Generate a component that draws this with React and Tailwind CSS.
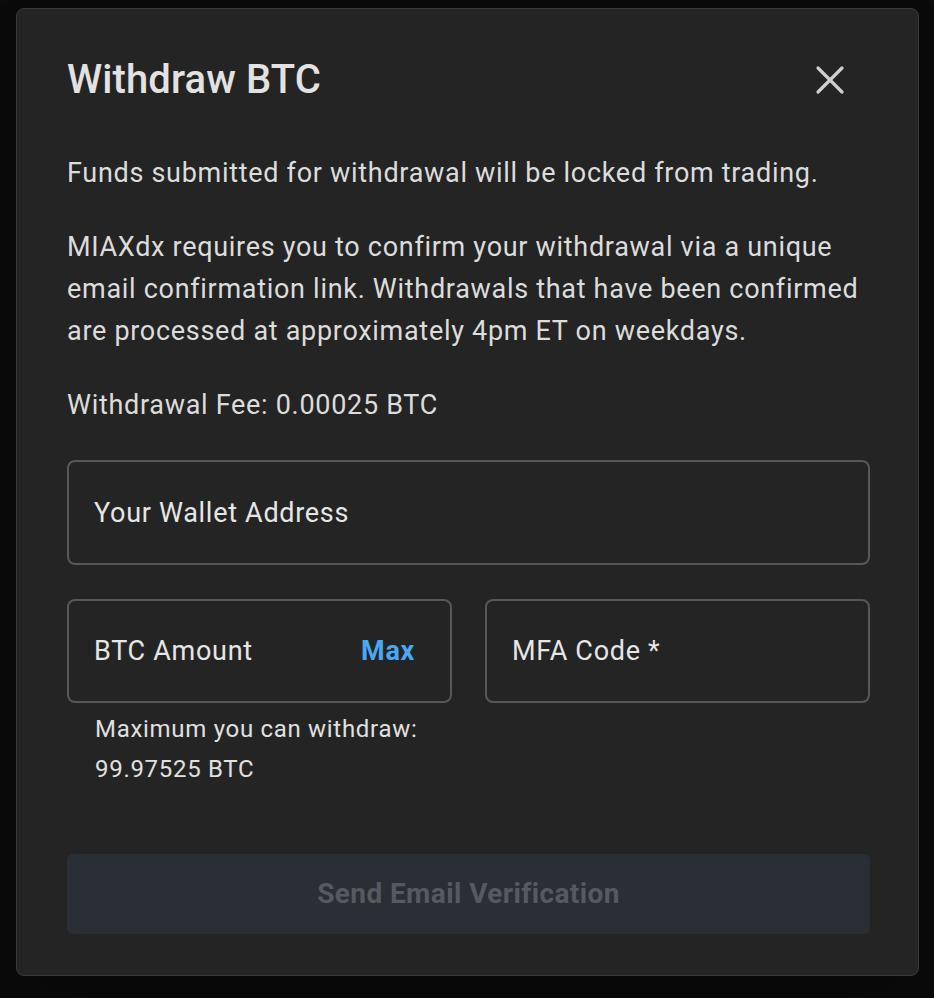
import React, { useState } from "react";

const WithdrawModal = () => {
  const [wallet, setWallet] = useState("");
  const [amount, setAmount] = useState("");
  const [mfa, setMfa] = useState("");

  return (
    <div className="min-h-screen bg-[#0a0a0a] pt-2 pl-4 font-['Roboto',sans-serif]">
      <div className="w-[903px] h-[968px] rounded-lg border border-[#3a3a3a] bg-[#242424] pl-[50px] pr-[48px] pt-[48px] shadow-2xl">
        {/* Header */}
        <div className="flex items-center justify-between h-[46px]">
          <h2 className="text-[40px] leading-[46px] font-medium tracking-[0.1px] text-[#e2e2e2]">
            Withdraw BTC
          </h2>
          <button className="mr-[24px] text-[#cfcfcf]">
            <svg width="32" height="32" viewBox="0 0 32 32">
              <path
                d="M4 4 L28 28 M28 4 L4 28"
                stroke="currentColor"
                strokeWidth="3.2"
                strokeLinecap="round"
              />
            </svg>
          </button>
        </div>

        {/* Body */}
        <div className="mt-[49px] text-[27px] leading-[42px] tracking-[0.7px] text-[#dcdcdc]">
          <p>Funds submitted for withdrawal will be locked from trading.</p>
          <p className="mt-[32px]">
            MIAXdx requires you to confirm your withdrawal via a unique email
            confirmation link. Withdrawals that have been confirmed are
            processed at approximately 4pm ET on weekdays.
          </p>
          <p className="mt-[32px]">Withdrawal Fee: 0.00025 BTC</p>
        </div>

        {/* Inputs */}
        <div className="mt-[34px]">
          <input
            value={wallet}
            onChange={(e) => setWallet(e.target.value)}
            placeholder="Your Wallet Address"
            className="w-full h-[105px] rounded-lg border-2 border-[#575757] bg-transparent px-[25px] text-[27px] tracking-[0.7px] text-[#e6e6e6] placeholder-[#e6e6e6] outline-none"
          />
        </div>

        <div className="mt-[34px] grid grid-cols-2 gap-[33px]">
          <div>
            <div className="flex items-center h-[104px] rounded-lg border-2 border-[#575757] px-[25px]">
              <input
                value={amount}
                onChange={(e) => setAmount(e.target.value)}
                placeholder="BTC Amount"
                className="flex-1 min-w-0 bg-transparent text-[27px] tracking-[0.7px] text-[#e6e6e6] placeholder-[#e6e6e6] outline-none"
              />
              <button className="mr-[10px] text-[27px] font-bold tracking-[0.7px] text-[#4aa8f0]">
                Max
              </button>
            </div>
            <div className="mt-[6px] px-[28px] text-[24px] leading-[40px] tracking-[0.7px] text-[#e0e0e0]">
              <p>Maximum you can withdraw:</p>
              <p>99.97525 BTC</p>
            </div>
          </div>
          <div>
            <input
              value={mfa}
              onChange={(e) => setMfa(e.target.value)}
              placeholder="MFA Code *"
              className="w-full h-[104px] rounded-lg border-2 border-[#575757] bg-transparent px-[25px] text-[27px] tracking-[0.7px] text-[#e6e6e6] placeholder-[#e6e6e6] outline-none"
            />
          </div>
        </div>

        {/* Footer */}
        <button
          disabled
          className="mt-[65px] w-full h-[80px] rounded-md bg-[#2a2e35] text-[28px] font-bold tracking-[0.4px] text-[#555a60]"
        >
          Send Email Verification
        </button>
      </div>
    </div>
  );
};

export default function App() {
  return <WithdrawModal />;
}
